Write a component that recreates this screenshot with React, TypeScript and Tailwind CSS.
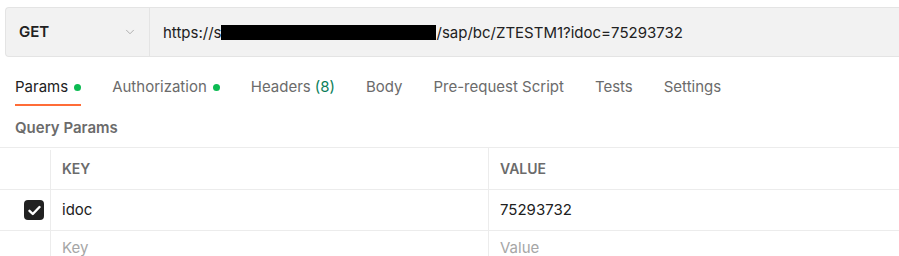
import React from 'react';
import { ChevronDown } from 'lucide-react';

// Postman request editor - params tab
const tabs = [
  { label: 'Params', dot: true, active: true },
  { label: 'Authorization', dot: true },
  { label: 'Headers', count: '(8)' },
  { label: 'Body' },
  { label: 'Pre-request Script' },
  { label: 'Tests' },
  { label: 'Settings' },
];

const App: React.FC = () => {
  return (
    <div
      className="w-[899px] h-[256px] overflow-hidden bg-white pt-[7px] text-[15px] text-[#212121]"
      style={{ fontFamily: 'Inter, "Noto Sans", sans-serif' }}
    >
      {/* url bar */}
      <div className="ml-[5px] flex h-[50px] rounded-l-[4px] border border-r-0 border-[#e4e4e4] bg-[#f2f2f2]">
        <div className="flex w-[144px] items-center justify-between border-r border-[#e4e4e4] pl-[13px] pr-[12px]">
          <span className="font-semibold text-[#212121]">GET</span>
          <ChevronDown className="h-[14px] w-[14px] text-[#9a9a9a]" strokeWidth={1.3} />
        </div>
        <div className="flex items-center pl-[13px] leading-none">
          <span>https://s</span>
          <span className="h-[15px] w-[215px] bg-black"></span>
          <span>/sap/bc/ZTESTM1?idoc=75293732</span>
        </div>
      </div>

      {/* tabs */}
      <div className="mt-[20px] flex gap-[31px] pl-[15px]">
        {tabs.map((t) => (
          <div
            key={t.label}
            className={`flex h-[29px] items-start border-b-2 leading-[20px] ${
              t.active ? 'border-[#ff6c37] text-[#212121]' : 'border-transparent text-[#6b6b6b]'
            }`}
          >
            <span>{t.label}</span>
            {t.count && <span className="ml-[4px] text-[#0b7e5a]">{t.count}</span>}
            {t.dot && <span className="ml-[6px] mt-[7px] h-[7px] w-[7px] rounded-full bg-[#0cbb52]"></span>}
          </div>
        ))}
      </div>

      <div className="mt-[12px] pl-[15px] font-semibold leading-[20px] text-[#6b6b6b]">Query Params</div>

      {/* table */}
      <div className="mt-[9px] border-t border-[#ececec]">
        <div className="flex h-[42px] border-b border-[#ececec]">
          <div className="mt-[2px] w-[51px] border-r border-[#ececec]"></div>
          <div className="flex w-[438px] items-center border-r border-[#ececec] pl-[11px] text-[14px] font-semibold text-[#6b6b6b]">
            KEY
          </div>
          <div className="flex flex-1 items-center pl-[11px] text-[14px] font-semibold text-[#6b6b6b]">VALUE</div>
        </div>
        <div className="flex h-[41px] border-b border-[#ececec]">
          <div className="flex w-[51px] items-center border-r border-[#ececec] pl-[24px]">
            <span className="flex h-[20px] w-[20px] items-center justify-center rounded-[4px] bg-[#212121]">
              <svg width="13" height="11" viewBox="0 0 13 11" fill="none">
                <path d="M1.5 5.8 L4.8 9 L11.5 2" stroke="white" strokeWidth="2.4" strokeLinecap="round" strokeLinejoin="round" />
              </svg>
            </span>
          </div>
          <div className="flex w-[438px] items-center border-r border-[#ececec] pl-[11px]">idoc</div>
          <div className="flex flex-1 items-center pl-[11px]">75293732</div>
        </div>
        <div className="flex h-[41px] leading-[20px]">
          <div className="w-[51px] border-r border-[#ececec]"></div>
          <div className="w-[438px] border-r border-[#ececec] pl-[11px] pt-[7px] text-[#a6a6a6]">Key</div>
          <div className="flex-1 pl-[11px] pt-[7px] text-[#a6a6a6]">Value</div>
        </div>
      </div>
    </div>
  );
};

export default App;
